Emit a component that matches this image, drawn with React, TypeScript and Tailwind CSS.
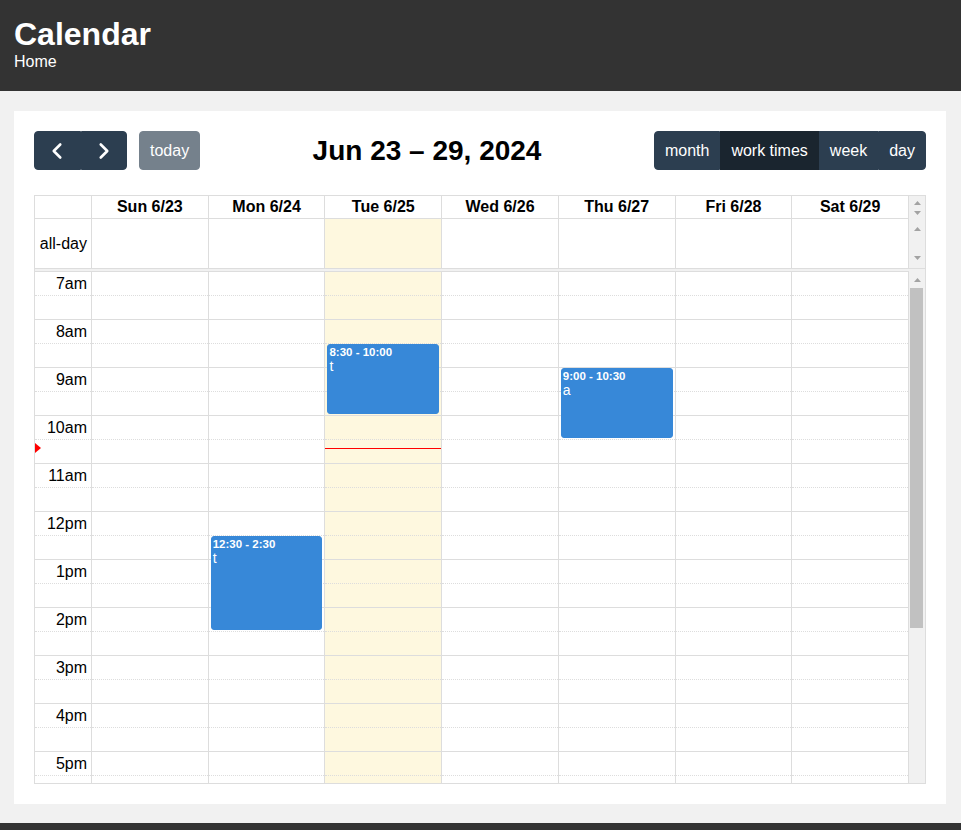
import { ChevronLeft, ChevronRight } from "lucide-react";

const days = ["Sun 6/23", "Mon 6/24", "Tue 6/25", "Wed 6/26", "Thu 6/27", "Fri 6/28", "Sat 6/29"];
const hours = ["7am", "8am", "9am", "10am", "11am", "12pm", "1pm", "2pm", "3pm", "4pm", "5pm"];
const todayIndex = 2;

const events = [
  { day: 1, start: 12.5, end: 14.5, time: "12:30 - 2:30", title: "t" },
  { day: 2, start: 8.5, end: 10, time: "8:30 - 10:00", title: "t" },
  { day: 4, start: 9, end: 10.5, time: "9:00 - 10:30", title: "a" },
];

const cols = "grid grid-cols-[56px_repeat(7,minmax(0,1fr))_17px]";

function Arrow({ up, dark }: { up?: boolean; dark?: boolean }) {
  return (
    <svg width="7" height="4" viewBox="0 0 7 4">
      <polygon points={up ? "3.5,0 7,4 0,4" : "0,0 7,0 3.5,4"} fill={dark ? "#505050" : "#a3a3a3"} />
    </svg>
  );
}

function SlotRows() {
  return (
    <>
      {Array.from({ length: 22 }).map((_, i) => (
        <div
          key={i}
          className={
            i % 2 === 0
              ? "h-[24px] border-t border-[#ddd]"
              : "h-[24px] border-t border-dotted border-[#ddd]"
          }
        />
      ))}
    </>
  );
}

export default function App() {
  return (
    <div className="font-['Liberation_Sans',Arial,sans-serif] text-black">
      {/* Header */}
      <header className="bg-[#333] h-[91px] px-[14px] pt-[16px] text-white">
        <h1 className="text-[32px] font-bold leading-[36px]">Calendar</h1>
        <div className="text-[16px] leading-[19px]">Home</div>
      </header>

      <main className="bg-[#f1f1f1] pl-[14px] pr-[15px] pt-[20px] pb-[19px]">
        <div className="bg-white p-[20px]">
          {/* Toolbar */}
          <div className="flex items-center justify-between mb-[25px]">
            <div className="flex items-center">
              <div className="flex">
                <button className="h-[39px] w-[46.5px] flex items-center justify-center bg-[#2c3e50] border border-[#2c3e50] rounded-l-[4px] text-white">
                  <ChevronLeft size={26} strokeWidth={2.4} />
                </button>
                <button className="h-[39px] w-[46.5px] flex items-center justify-center bg-[#2c3e50] border border-[#2c3e50] rounded-r-[4px] text-white">
                  <ChevronRight size={26} strokeWidth={2.4} />
                </button>
              </div>
              <button className="ml-[12px] h-[39px] px-[10px] text-[16px] leading-[24px] bg-[#2c3e50] border border-[#2c3e50] rounded-[4px] text-white opacity-65">
                today
              </button>
            </div>

            <h2 className="text-[28px] font-bold leading-[32px]">Jun 23 – 29, 2024</h2>

            <div className="flex">
              <button className="h-[39px] px-[10px] text-[16px] leading-[24px] bg-[#2c3e50] border border-[#2c3e50] rounded-l-[4px] text-white">
                month
              </button>
              <button className="h-[39px] px-[10px] text-[16px] leading-[24px] bg-[#1a252f] border border-[#1a252f] text-white">
                work times
              </button>
              <button className="h-[39px] px-[10px] text-[16px] leading-[24px] bg-[#2c3e50] border border-[#2c3e50] text-white">
                week
              </button>
              <button className="h-[39px] px-[10px] text-[16px] leading-[24px] bg-[#2c3e50] border border-[#2c3e50] rounded-r-[4px] text-white">
                day
              </button>
            </div>
          </div>

          {/* Calendar table */}
          <div className="border border-[#ddd] text-[16px]">
            {/* Column headers */}
            <div className={cols}>
              <div className="h-[23px] border-b border-[#ddd]" />
              {days.map((d) => (
                <div
                  key={d}
                  className="h-[23px] border-l border-b border-[#ddd] flex items-center justify-center font-bold leading-[18px]"
                >
                  {d}
                </div>
              ))}
              <div className="h-[23px] border-l border-[#ddd] bg-[#f1f1f1] flex flex-col items-center pt-[5px] gap-[6px]">
                <Arrow up />
                <Arrow />
              </div>
            </div>

            {/* All-day row */}
            <div className={cols}>
              <div className="h-[50px] border-b border-[#ddd] flex items-center justify-end pr-[4px]">all-day</div>
              {days.map((d, i) => (
                <div
                  key={d}
                  className={
                    i === todayIndex
                      ? "h-[50px] border-l border-b border-[#ddd] bg-[#fef8df]"
                      : "h-[50px] border-l border-b border-[#ddd]"
                  }
                />
              ))}
              <div className="h-[50px] border-l border-b border-[#ddd] bg-[#f1f1f1] flex flex-col items-center justify-between pt-[8px] pb-[8px]">
                <Arrow up />
                <Arrow />
              </div>
            </div>

            {/* Divider */}
            <div className="h-[2px] bg-[#f1f1f1]" />

            {/* Time grid */}
            <div className={cols + " h-[512px] overflow-hidden"}>
              <div className="relative">
                {hours.map((h) => (
                  <div key={h}>
                    <div className="h-[24px] border-t border-[#ddd] flex items-center justify-end pr-[4px] leading-[18px]">
                      {h}
                    </div>
                    <div className="h-[24px] border-t border-dotted border-[#ddd]" />
                  </div>
                ))}
                <div className="absolute left-0 top-[172px] w-0 h-0 border-y-[5px] border-y-transparent border-l-[6px] border-l-[#ff0000]" />
              </div>

              {days.map((d, i) => (
                <div
                  key={d}
                  className={
                    i === todayIndex
                      ? "relative border-l border-[#ddd] bg-[#fef8df]"
                      : "relative border-l border-[#ddd]"
                  }
                >
                  <SlotRows />
                  {events
                    .filter((e) => e.day === i)
                    .map((e) => (
                      <div
                        key={e.time}
                        className="absolute left-[2px] right-[2px] rounded-[3px] bg-[#3788d8] border border-[#3788d8] text-white px-[1px] pt-[1px] overflow-hidden"
                        style={{ top: (e.start - 7) * 48 + 1, height: (e.end - e.start) * 48 - 2 }}
                      >
                        <div className="text-[11.5px] leading-[13px] font-bold whitespace-nowrap">{e.time}</div>
                        <div className="text-[14px] leading-[15px]">{e.title}</div>
                      </div>
                    ))}
                  {i === todayIndex && (
                    <div className="absolute left-0 right-0 top-[177px] border-t border-[#ff0000]" />
                  )}
                </div>
              ))}

              <div className="border-l border-[#ddd] bg-[#f1f1f1] flex flex-col">
                <div className="h-[17px] flex items-center justify-center">
                  <Arrow up />
                </div>
                <div className="ml-[1px] mr-[2px] h-[340px] bg-[#c1c1c1]" />
                <div className="flex-1" />
                <div className="h-[17px] flex items-center justify-center">
                  <Arrow dark />
                </div>
              </div>
            </div>
          </div>
        </div>
      </main>

      <footer className="bg-[#333] h-[60px]" />
    </div>
  );
}
